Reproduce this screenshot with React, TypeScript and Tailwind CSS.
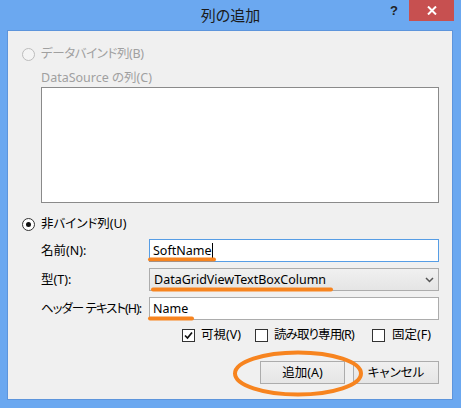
import React from "react";

function Radio({ checked, disabled }: { checked?: boolean; disabled?: boolean }) {
  return (
    <span
      className={
        disabled
          ? "w-[13px] h-[13px] rounded-full border border-[#bcbcbc] bg-[#f4f4f4] flex items-center justify-center shrink-0"
          : "w-[13px] h-[13px] rounded-full border border-[#333333] bg-white flex items-center justify-center shrink-0"
      }
    >
      {checked && <span className="w-[5px] h-[5px] rounded-full bg-[#111]" />}
    </span>
  );
}

function Check({ checked }: { checked?: boolean }) {
  return (
    <span className="w-[13px] h-[13px] border border-[#333333] bg-white flex items-center justify-center shrink-0">
      {checked && (
        <svg width="11" height="11" viewBox="0 0 11 11">
          <path d="M2 5.5 L4.5 8 L9 2.5" fill="none" stroke="#111" strokeWidth="1.7" />
        </svg>
      )}
    </span>
  );
}

export default function App() {
  return (
    <div className="relative w-[461px] h-[408px] bg-[#6ba8f0] flex flex-col font-['Noto_Sans','Noto_Sans_CJK_JP',sans-serif] [font-feature-settings:'palt'] text-[12.5px] leading-[16px] text-black select-none whitespace-nowrap">
      {/* title bar */}
      <div className="relative h-[30px] flex items-center justify-center">
        <span className="text-[15px] leading-[20px] text-[#1a1a1a] mt-[-1px]">列の追加</span>
        <div className="absolute right-[7px] top-0 flex items-start">
          <span className="w-[30px] h-[21px] flex items-center justify-center text-[13px] font-bold text-[#222] font-['Liberation_Sans',sans-serif]">?</span>
          <span className="w-[45px] h-[21px] bg-[#c75050] flex items-center justify-center">
            <svg width="10" height="9" viewBox="0 0 10 9">
              <path d="M1 0.5 L9 8.5 M9 0.5 L1 8.5" stroke="#fff" strokeWidth="2" />
            </svg>
          </span>
        </div>
      </div>

      {/* client area */}
      <div className="ml-[7px] w-[446px] h-[370px] bg-[#f0f0f0] border border-[#5d95dc] flex flex-col">
        <div className="mt-[15px] pl-[14px] h-[16px] flex items-center gap-[6px] text-[#a0a0a0]">
          <Radio disabled />
          <span className="tracking-[-0.4px]">データバインド列(B)</span>
        </div>
        <div className="mt-[8px] pl-[33px] h-[16px] text-[#a0a0a0]">DataSource の列(C)</div>
        <div className="mt-[1px] ml-[33px] w-[398px] h-[116px] border border-[#8a8a8a] bg-white" />

        <div className="mt-[13px] pl-[14px] h-[16px] flex items-center gap-[6px]">
          <Radio checked />
          <span>非バインド列(U)</span>
        </div>

        <div className="mt-[7px] ml-[33px] h-[23px] flex items-center">
          <span className="w-[108px] shrink-0">名前(N):</span>
          <div className="w-[290px] shrink-0 h-[23px] border border-[#569de5] bg-white flex items-center pl-[3px]">
            <span>SoftName</span>
            <span className="w-[1px] h-[15px] bg-black" />
          </div>
        </div>

        <div className="mt-[6px] ml-[33px] h-[23px] flex items-center">
          <span className="w-[108px] shrink-0">型(T):</span>
          <div className="w-[290px] shrink-0 h-[23px] border border-[#acacac] bg-gradient-to-b from-[#f0f0f0] to-[#e5e5e5] flex items-center pl-[4px] pr-[4px] justify-between">
            <span>DataGridViewTextBoxColumn</span>
            <svg width="9" height="6" viewBox="0 0 9 6">
              <path d="M1 1 L4.5 4.5 L8 1" fill="none" stroke="#555" strokeWidth="1.5" />
            </svg>
          </div>
        </div>

        <div className="mt-[6px] ml-[33px] h-[23px] flex items-center">
          <span className="w-[108px] shrink-0 overflow-visible tracking-[-1px]">ヘッダー テキスト(H):</span>
          <div className="w-[290px] shrink-0 h-[23px] border border-[#acacac] bg-white flex items-center pl-[3px]">
            <span>Name</span>
          </div>
        </div>

        <div className="mt-[7px] ml-[174px] h-[16px] flex items-center">
          <div className="w-[73px] shrink-0 flex items-center gap-[6px]">
            <Check checked />
            <span>可視(V)</span>
          </div>
          <div className="w-[117px] shrink-0 flex items-center gap-[6px]">
            <Check />
            <span className="tracking-[-0.9px]">読み取り専用(R)</span>
          </div>
          <div className="flex items-center gap-[7px]">
            <Check />
            <span>固定(F)</span>
          </div>
        </div>

        <div className="mt-[18px] pr-[13px] flex justify-end gap-[8px]">
          <button className="w-[85px] h-[23px] border border-[#acacac] bg-gradient-to-b from-[#f0f0f0] to-[#e5e5e5] flex items-center justify-center">
            追加(A)
          </button>
          <button className="w-[86px] h-[23px] border border-[#acacac] bg-gradient-to-b from-[#f0f0f0] to-[#e5e5e5] flex items-center justify-center">
            キャンセル
          </button>
        </div>
      </div>

      {/* annotation overlay */}
      <svg className="absolute inset-0 pointer-events-none" width="461" height="408" viewBox="0 0 461 408">
        <g stroke="#f7841f" strokeWidth="4" strokeLinecap="round" fill="none">
          <path d="M150 259.5 L214 259.5" />
          <path d="M153 289.5 L331 289.5" />
          <path d="M150 318.5 L192 318.5" />
          <ellipse cx="298" cy="373.5" rx="63" ry="21" />
        </g>
      </svg>
    </div>
  );
}
